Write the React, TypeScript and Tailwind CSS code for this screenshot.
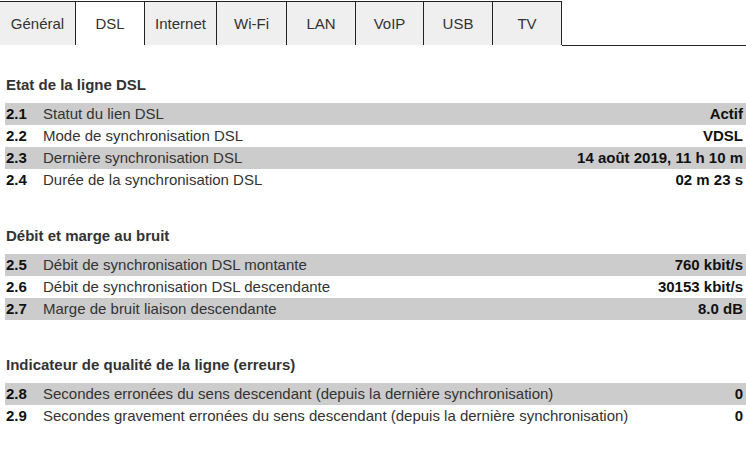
import React from 'react';

type Row = { id: string; label: string; value: string };
type Section = { title: string; rows: Row[] };

const tabs = [
  { name: 'Général', w: 'w-[76px]' },
  { name: 'DSL', w: 'w-[69px]' },
  { name: 'Internet', w: 'w-[72px]' },
  { name: 'Wi-Fi', w: 'w-[70px]' },
  { name: 'LAN', w: 'w-[69px]' },
  { name: 'VoIP', w: 'w-[68px]' },
  { name: 'USB', w: 'w-[69px]' },
  { name: 'TV', w: 'w-[69px]' },
];

const sections: Section[] = [
  {
    title: 'Etat de la ligne DSL',
    rows: [
      { id: '2.1', label: 'Statut du lien DSL', value: 'Actif' },
      { id: '2.2', label: 'Mode de synchronisation DSL', value: 'VDSL' },
      { id: '2.3', label: 'Dernière synchronisation DSL', value: '14 août 2019, 11 h 10 m' },
      { id: '2.4', label: 'Durée de la synchronisation DSL', value: '02 m 23 s' },
    ],
  },
  {
    title: 'Débit et marge au bruit',
    rows: [
      { id: '2.5', label: 'Débit de synchronisation DSL montante', value: '760 kbit/s' },
      { id: '2.6', label: 'Débit de synchronisation DSL descendante', value: '30153 kbit/s' },
      { id: '2.7', label: 'Marge de bruit liaison descendante', value: '8.0 dB' },
    ],
  },
  {
    title: 'Indicateur de qualité de la ligne (erreurs)',
    rows: [
      {
        id: '2.8',
        label: 'Secondes erronées du sens descendant (depuis la dernière synchronisation)',
        value: '0',
      },
      {
        id: '2.9',
        label: 'Secondes gravement erronées du sens descendant (depuis la dernière synchronisation)',
        value: '0',
      },
    ],
  },
];

export default function App() {
  return (
    <div className="w-[746px] h-[463px] bg-white font-['Liberation_Sans',Arial,sans-serif] text-[#333] overflow-hidden">
      {/* onglets */}
      <div className="flex items-start pt-px">
        {tabs.map((t, i) => (
          <div
            key={t.name}
            className={`${t.w} h-[44px] pt-[2px] flex items-center justify-center text-[15px] border-t border-r border-[#222] ${
              i === 1 ? 'bg-white' : 'bg-[#efefef]'
            }`}
          >
            {t.name}
          </div>
        ))}
        <div className="flex-1 h-[45px] border-b border-[#222]" />
      </div>

      {/* sections */}
      <div className="pl-[5px] pt-[29px] flex flex-col gap-[35px]">
        {sections.map(s => (
          <div key={s.title}>
            <div className="h-[20px] leading-[20px] pl-px text-[15px] font-bold text-[#333] mb-[8px]">
              {s.title}
            </div>
            {s.rows.map((r, i) => (
              <div
                key={r.id}
                className={`h-[22px] flex items-center text-[15px] pr-[3px] ${
                  i % 2 === 0 ? 'bg-[#cccccc]' : 'bg-white'
                }`}
              >
                <span className="w-[38px] pl-px font-bold text-[#111]">{r.id}</span>
                <span className="flex-1 text-[#333]">{r.label}</span>
                <span className="font-bold text-[#111]">{r.value}</span>
              </div>
            ))}
          </div>
        ))}
      </div>
    </div>
  );
}
